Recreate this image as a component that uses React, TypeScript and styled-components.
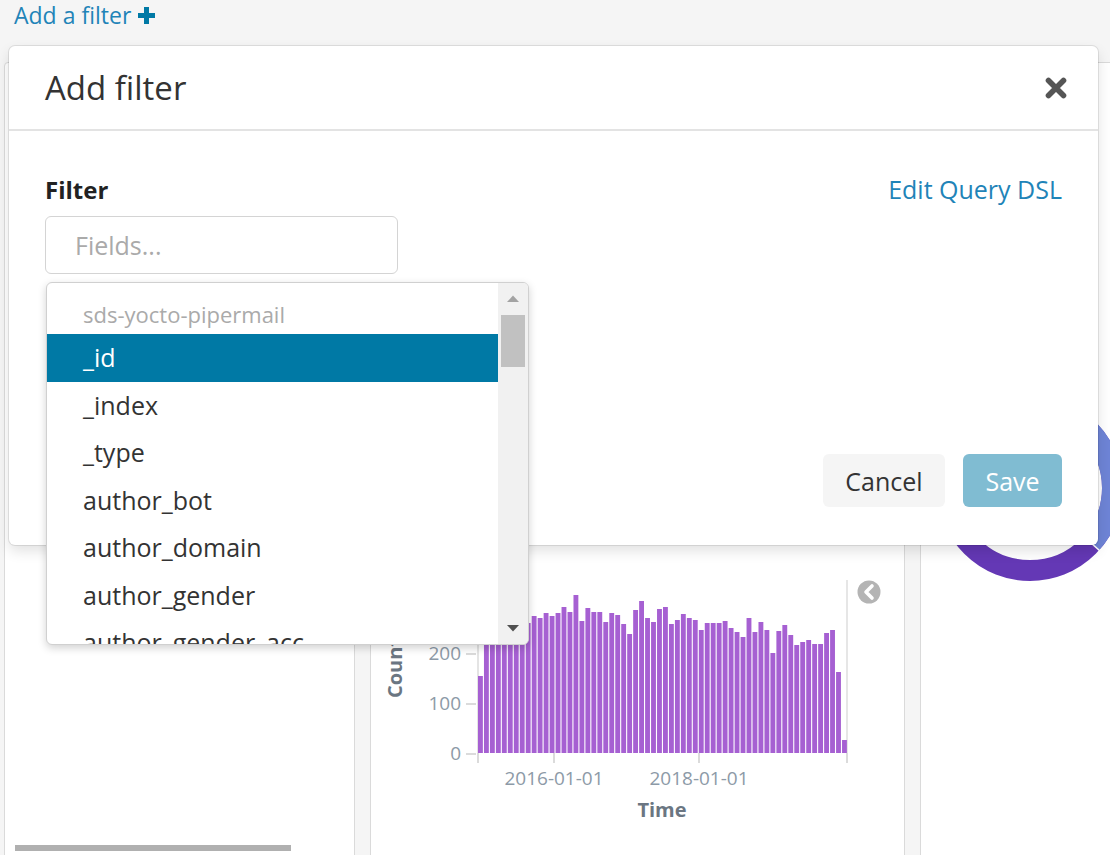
import React from "react";
import styled, { createGlobalStyle } from "styled-components";

const GlobalStyle = createGlobalStyle`
  *, *::before, *::after { box-sizing: border-box; }
  html, body { margin: 0; padding: 0; }
  body {
    font-family: "Open Sans", "Noto Sans", sans-serif;
    background: #f5f5f5;
    overflow: hidden;
  }
`;

const fields = [
  "_id",
  "_index",
  "_type",
  "author_bot",
  "author_domain",
  "author_gender",
  "author_gender_acc",
];

// monthly message counts, read off the histogram
const counts = [
  154, 250, 262, 258, 270, 248, 266, 255, 260, 274, 270, 280, 274, 280, 292, 282, 316, 264,
  290, 282, 282, 262, 280, 276, 258, 238, 286, 304, 270, 262, 288, 292, 258, 266, 278, 270,
  266, 246, 260, 260, 260, 264, 250, 242, 232, 270, 242, 262, 246, 200, 244, 256, 236, 216,
  222, 226, 218, 218, 240, 246, 162, 26,
];

const App = () => {
  return (
    <Page>
      <GlobalStyle />
      <TopBar>
        <AddFilterLink>
          Add a filter
          <svg width="17" height="17" viewBox="0 0 17 17">
            <rect x="6" y="0" width="5" height="17" fill="#0079a5" />
            <rect x="0" y="6" width="17" height="5" fill="#0079a5" />
          </svg>
        </AddFilterLink>
      </TopBar>

      <Dashboard>
        <TablePanel>
          <ScrollThumb />
        </TablePanel>
        <ChartPanel>
          <Histogram />
        </ChartPanel>
        <DonutPanel>
          <Donut />
        </DonutPanel>
      </Dashboard>

      <Modal>
        <ModalHeader>
          <ModalTitle>Add filter</ModalTitle>
          <CloseButton aria-label="close">
            <svg width="24" height="24" viewBox="0 0 24 24">
              <path
                d="M4.5 4.5 L19.5 19.5 M19.5 4.5 L4.5 19.5"
                stroke="#555"
                strokeWidth="5.6"
                strokeLinecap="round"
              />
            </svg>
          </CloseButton>
        </ModalHeader>
        <ModalBody>
          <FieldRow>
            <FieldLabel>Filter</FieldLabel>
            <TextLink>Edit Query DSL</TextLink>
          </FieldRow>
          <ComboBox>
            <FieldInput placeholder="Fields..." readOnly />
            <Dropdown>
              <OptionList>
                <GroupHeader>sds-yocto-pipermail</GroupHeader>
                {fields.map((f, i) => (
                  <Option key={f} $active={i === 0}>
                    {f}
                  </Option>
                ))}
              </OptionList>
              <Scrollbar>
                <ScrollArrow>
                  <svg width="12" height="8" viewBox="0 0 12 8">
                    <path d="M0 7 L6 0.5 L12 7 Z" fill="#a3a3a3" />
                  </svg>
                </ScrollArrow>
                <ScrollBarThumb />
                <ScrollSpacer />
                <ScrollArrow>
                  <svg width="12" height="8" viewBox="0 0 12 8">
                    <path d="M0 1 L12 1 L6 7.5 Z" fill="#505050" />
                  </svg>
                </ScrollArrow>
              </Scrollbar>
            </Dropdown>
          </ComboBox>
          <Footer>
            <CancelButton>Cancel</CancelButton>
            <SaveButton disabled>Save</SaveButton>
          </Footer>
        </ModalBody>
      </Modal>
    </Page>
  );
};

const Histogram = () => {
  const x0 = 107;
  const x1 = 477;
  const base = 193;
  const pitch = (x1 - x0) / counts.length;
  return (
    <svg width="533" height="270" viewBox="0 0 533 270">
      <line x1={x0} y1="20" x2={x0} y2={base} stroke="#e4e4e4" strokeWidth="2" />
      <line x1={x1 - 1} y1="20" x2={x1 - 1} y2={base} stroke="#e6e6e6" strokeWidth="2" />
      {counts.map((c, i) => (
        <rect
          key={i}
          x={x0 + i * pitch}
          y={base - c / 2}
          width={pitch - 1.1}
          height={c / 2}
          fill="#a660d2"
        />
      ))}
      {[0, 100, 200].map((v) => (
        <g key={v}>
          <line x1="95" y1={base - v / 2 + 1} x2="105" y2={base - v / 2 + 1} stroke="#cfcfcf" strokeWidth="1.5" />
          <AxisText x="90" y={base - v / 2 + 2} textAnchor="end" dominantBaseline="middle">
            {v}
          </AxisText>
        </g>
      ))}
      {[x0, 183, 328, x1 - 1].map((x) => (
        <line key={x} x1={x} y1={base} x2={x} y2={base + 10} stroke="#cfcfcf" strokeWidth="1.5" />
      ))}
      <AxisText x="183" y="220" textAnchor="middle" dominantBaseline="middle">
        2016-01-01
      </AxisText>
      <AxisText x="328" y="220" textAnchor="middle" dominantBaseline="middle">
        2018-01-01
      </AxisText>
      <AxisTitle x="291" y="252" textAnchor="middle" dominantBaseline="middle">
        Time
      </AxisTitle>
      <AxisTitle
        x="26"
        y="108"
        textAnchor="middle"
        dominantBaseline="middle"
        transform="rotate(-90 26 108)"
      >
        Count
      </AxisTitle>
      <circle cx="498" cy="32" r="11.5" fill="#b4b4b4" />
      <path
        d="M501 26 L495 32 L501 38"
        fill="none"
        stroke="#fff"
        strokeWidth="3.6"
        strokeLinecap="round"
        strokeLinejoin="round"
      />
    </svg>
  );
};

const Donut = () => {
  const cx = 109;
  const cy = 108;
  const r = 82.5;
  const pt = (a: number, rad: number) => {
    const t = (a * Math.PI) / 180;
    return `${cx + rad * Math.cos(t)} ${cy + rad * Math.sin(t)}`;
  };
  return (
    <svg width="190" height="220" viewBox="0 0 190 220">
      <circle cx={cx} cy={cy} r={r} fill="none" stroke="#6438b5" strokeWidth="21" />
      <path d={`M ${pt(-90, r)} A ${r} ${r} 0 0 1 ${pt(42, r)}`} fill="none" stroke="#6e84d6" strokeWidth="21" />
      <path d={`M ${pt(42, 70)} L ${pt(42, 95)}`} stroke="#fff" strokeWidth="1.5" />
    </svg>
  );
};

export default App;

const Page = styled.div`
  position: relative;
  width: 1110px;
  height: 855px;
  overflow: hidden;
  background: #f5f5f5;
`;

const TopBar = styled.div`
  height: 46px;
  padding: 1px 0 0 14px;
  display: flex;
  align-items: flex-start;
`;

const AddFilterLink = styled.a`
  display: inline-flex;
  align-items: center;
  gap: 7px;
  font-size: 23px;
  line-height: 28px;
  color: #1f84b8;
  cursor: pointer;
`;

const Dashboard = styled.div`
  display: grid;
  grid-template-columns: 351px 535px 1fr;
  column-gap: 15px;
  height: 819px;
  padding: 16px 0 0 4px;
`;

const Panel = styled.div`
  background: #fff;
  border: 1px solid #dadada;
  border-radius: 4px;
  overflow: hidden;
  display: flex;
  flex-direction: column;
`;

const TablePanel = styled(Panel)`
  justify-content: flex-end;
`;

const ScrollThumb = styled.div`
  width: 276px;
  height: 6px;
  margin: 0 0 13px 10px;
  background: #b0b0b0;
`;

const ChartPanel = styled(Panel)`
  padding-top: 497px;
`;

const DonutPanel = styled(Panel)`
  padding-top: 317px;
  border-right: none;
  border-radius: 4px 0 0 4px;
`;

const AxisText = styled.text`
  font-family: "Open Sans", sans-serif;
  font-size: 19px;
  fill: #8d9aa7;
`;

const AxisTitle = styled.text`
  font-family: "Open Sans", sans-serif;
  font-size: 20px;
  font-weight: 700;
  fill: #6b7682;
`;

const Modal = styled.div`
  position: absolute;
  top: 46px;
  left: 9px;
  width: 1089px;
  background: #fff;
  border-radius: 6px;
  box-shadow: 0 0 0 1px rgba(0, 0, 0, 0.09), 0 6px 14px rgba(0, 0, 0, 0.12);
`;

const ModalHeader = styled.div`
  height: 85px;
  padding: 0 30px 0 36px;
  display: flex;
  align-items: center;
  justify-content: space-between;
  border-bottom: 2px solid #e3e3e3;
`;

const ModalTitle = styled.h2`
  margin: 0;
  font-size: 33px;
  font-weight: 400;
  line-height: 1;
  color: #333;
`;

const CloseButton = styled.button`
  display: flex;
  padding: 0;
  border: none;
  background: none;
  cursor: pointer;
`;

const ModalBody = styled.div`
  padding: 41px 36px 38px 36px;
`;

const FieldRow = styled.div`
  display: flex;
  align-items: center;
  justify-content: space-between;
  height: 34px;
`;

const FieldLabel = styled.label`
  font-size: 24px;
  font-weight: 700;
  color: #222;
`;

const TextLink = styled.a`
  font-size: 25px;
  color: #1f84b8;
  cursor: pointer;
`;

const ComboBox = styled.div`
  position: relative;
  width: 353px;
  margin-top: 10px;
`;

const FieldInput = styled.input`
  display: block;
  width: 100%;
  height: 58px;
  padding: 0 0 0 29px;
  border: 1px solid #d4d4d4;
  border-radius: 6px;
  font-family: "Open Sans", sans-serif;
  font-size: 25px;
  color: #333;
  outline: none;
  &::placeholder {
    color: #aaa;
  }
`;

const Dropdown = styled.div`
  position: absolute;
  top: calc(100% + 8px);
  left: 1px;
  z-index: 2;
  width: 483px;
  height: 363px;
  display: flex;
  background: #fff;
  border: 1px solid #d0d0d0;
  border-radius: 6px;
  box-shadow: 0 3px 8px rgba(0, 0, 0, 0.18);
  overflow: hidden;
`;

const OptionList = styled.div`
  flex: 1;
  overflow: hidden;
`;

const GroupHeader = styled.div`
  height: 51px;
  padding: 12px 0 0 36px;
  font-size: 22px;
  line-height: 38px;
  color: #aaa;
`;

const Option = styled.div<{ $active?: boolean }>`
  height: 47.5px;
  padding-left: 36px;
  font-size: 25px;
  line-height: 47.5px;
  white-space: nowrap;
  color: ${(p) => (p.$active ? "#fff" : "#333")};
  background: ${(p) => (p.$active ? "#0079a5" : "transparent")};
`;

const Scrollbar = styled.div`
  width: 30px;
  display: flex;
  flex-direction: column;
  background: #f1f1f1;
`;

const ScrollArrow = styled.div`
  height: 32px;
  display: flex;
  align-items: center;
  justify-content: center;
`;

const ScrollBarThumb = styled.div`
  height: 52px;
  margin: 0 3px;
  background: #c1c1c1;
`;

const ScrollSpacer = styled.div`
  flex: 1;
`;

const Footer = styled.div`
  display: flex;
  justify-content: flex-end;
  gap: 18px;
  margin-top: 180px;
`;

const BaseButton = styled.button`
  height: 53px;
  border: none;
  border-radius: 6px;
  font-family: "Open Sans", sans-serif;
  font-size: 25px;
  cursor: pointer;
`;

const CancelButton = styled(BaseButton)`
  width: 122px;
  background: #f5f5f5;
  color: #333;
`;

const SaveButton = styled(BaseButton)`
  width: 99px;
  background: #80bcd2;
  color: #fff;
  &:disabled {
    cursor: default;
  }
`;
